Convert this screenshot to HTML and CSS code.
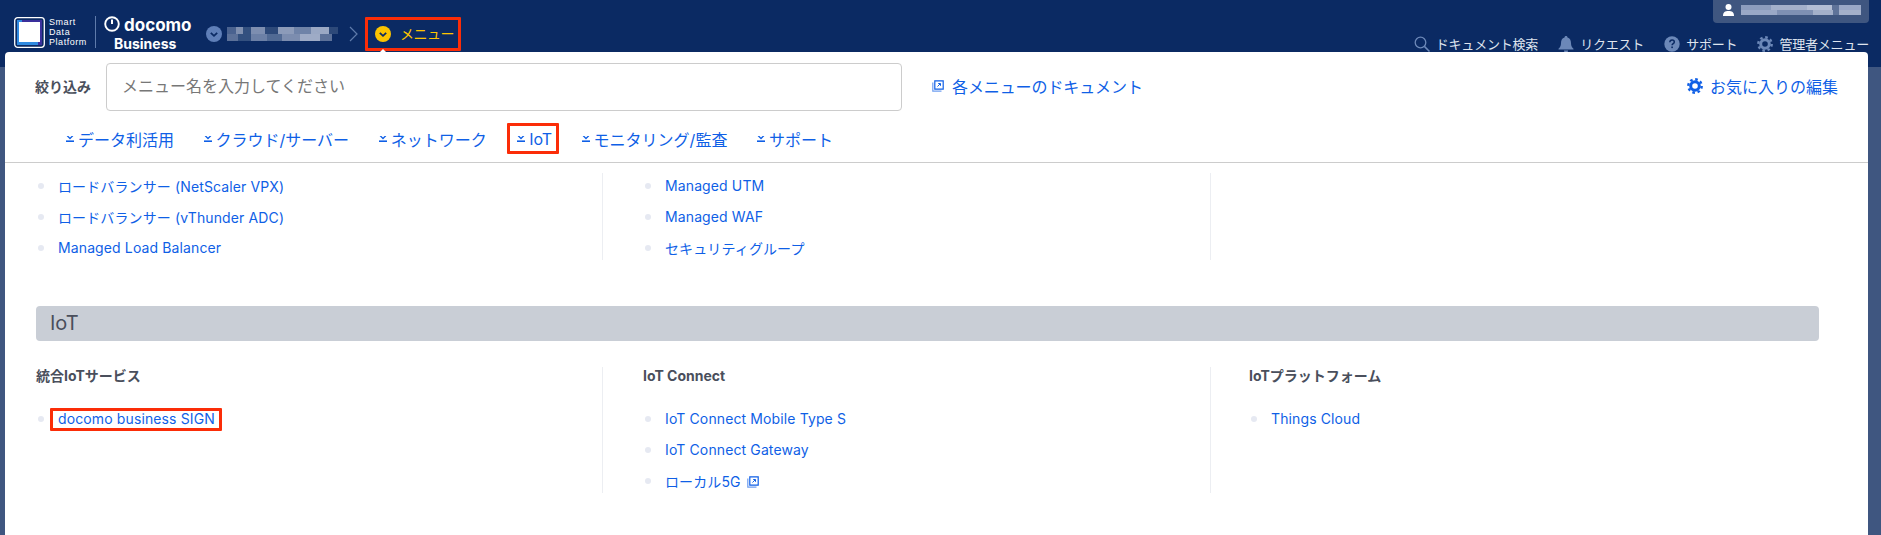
FILE: index.html
```html
<!DOCTYPE html>
<html lang="ja">
<head>
    <meta charset="UTF-8">
    <meta name="viewport" content="width=device-width, initial-scale=1.0">
    <title>Smart Data Platform メニュー</title>
    <link rel="stylesheet" href="styles.css">
</head>
<body>
    <svg class="defs" width="0" height="0">
        <symbol id="gear" viewBox="0 0 16 16">
            <circle cx="8" cy="8" r="6.7" fill="none" stroke="currentColor" stroke-width="2.4" stroke-dasharray="2.6 2.66"/>
            <circle cx="8" cy="8" r="4.3" fill="none" stroke="currentColor" stroke-width="3"/>
        </symbol>
        <symbol id="chevron-circle" viewBox="0 0 16 16">
            <circle cx="8" cy="8" r="8" fill="currentColor"/>
            <path d="M4.8 6.800 8 9.800l3.200-3" fill="none" stroke="#0b2a63" stroke-width="1.800"/>
        </symbol>
        <symbol id="jump" viewBox="0 0 8 6">
            <path d="M.6 0h1.800L4 1.500 5.600 0h1.800L4 3.400z" fill="currentColor"/>
            <path d="M0 4.400h8V6H0z" fill="currentColor"/>
        </symbol>
        <symbol id="doc-link" viewBox="0 0 12 12">
            <path d="M.8 2.500v8.700h8.700" fill="none" stroke="currentColor" stroke-width="1.200" opacity=".6"/>
            <path d="M2.800.8h8.400v8.400H2.800z" fill="none" stroke="currentColor" stroke-width="1.200"/>
            <path d="M5.500 6.500 8.200 3.800M6.200 3.500h2.300v2.300" fill="none" stroke="currentColor" stroke-width="1"/>
        </symbol>
    </svg>

    <header class="header">
        <div class="brand">
            <svg class="sdp-mark" width="31" height="31" viewBox="0 0 31 31">
                <rect x=".7" y=".7" width="29.600" height="29.600" rx="3" fill="#0b2a63" stroke="#fff" stroke-width="1.300"/>
                <path d="M3 3h25v25H3z" fill="#2f8ae0"/>
                <path d="M24 3h4v25h-4zM8 3h20v2.500H8z" fill="#3a2f9c"/>
                <rect x="5" y="5" width="21" height="20" fill="#fff"/>
            </svg>
            <div class="sdp-name">Smart<br>Data<br>Platform</div>
            <div class="brand-line"></div>
            <div class="docomo">
                <div class="docomo-top">
                    <svg width="16" height="16" viewBox="0 0 16 16">
                        <circle cx="8" cy="8" r="6.800" fill="none" stroke="#fff" stroke-width="1.900"/>
                        <path d="M8 3.600V8" stroke="#fff" stroke-width="2"/>
                    </svg>
                    <span class="docomo-word">docomo</span>
                </div>
                <div class="docomo-sub">Business</div>
            </div>
        </div>

        <nav class="crumbs">
            <svg class="crumb-icon crumb-icon-blue" width="16" height="16"><use href="#chevron-circle"/></svg>
            <div class="mosaic mosaic-crumb"></div>
            <svg class="crumb-sep" width="9" height="16" viewBox="0 0 9 16">
                <path d="M1 1l7 7-7 7" fill="none" stroke="#5f7bab" stroke-width="1.200"/>
            </svg>
            <div class="crumb-current marked mark-menu">
                <svg class="crumb-icon" width="16" height="16"><use href="#chevron-circle"/></svg>
                <span>メニュー</span>
            </div>
        </nav>

        <div class="header-right">
            <div class="user-box">
                <svg width="11" height="12" viewBox="0 0 11 12">
                    <circle cx="5.500" cy="3" r="3" fill="#fff"/>
                    <path d="M0 12c0-4 2-5 5.500-5s5.500 1 5.500 5z" fill="#fff"/>
                </svg>
                <div class="mosaic mosaic-user"></div>
            </div>
            <ul class="util-nav">
                <li>
                    <svg width="16" height="16" viewBox="0 0 16 16">
                        <circle cx="6.500" cy="6.500" r="5.300" fill="none" stroke="currentColor" stroke-width="1.300"/>
                        <path d="M10.400 10.400 15.500 15.500" stroke="currentColor" stroke-width="1.500"/>
                    </svg>
                    <span>ドキュメント検索</span>
                </li>
                <li>
                    <svg width="16" height="16" viewBox="0 0 16 16">
                        <path d="M8 0c1 0 1.500.7 1.500 1.500C12 2.200 13 4.500 13 7c0 3 1 4.500 2.500 5.800v.7H.5v-.7C2 11.500 3 10 3 7c0-2.500 1-4.800 3.500-5.500C6.500.7 7 0 8 0zM6 14.500h4a2 2 0 0 1-4 0z" fill="currentColor"/>
                    </svg>
                    <span>リクエスト</span>
                </li>
                <li>
                    <svg width="16" height="16" viewBox="0 0 16 16">
                        <circle cx="8" cy="8" r="7.700" fill="currentColor"/>
                        <path d="M5.800 6.200C5.900 4.800 6.800 4 8.100 4c1.300 0 2.200.8 2.200 1.900 0 1.700-2.200 1.600-2.200 3.400" fill="none" stroke="#0b2a63" stroke-width="1.500"/>
                        <rect x="7.300" y="10.500" width="1.600" height="1.600" fill="#0b2a63"/>
                    </svg>
                    <span>サポート</span>
                </li>
                <li>
                    <svg width="16" height="16"><use href="#gear"/></svg>
                    <span>管理者メニュー</span>
                </li>
            </ul>
        </div>
    </header>

    <main class="menu-panel">
        <div class="filter-row">
            <label class="filter-label" for="menuFilter">絞り込み</label>
            <input class="filter-input" id="menuFilter" type="text" placeholder="メニュー名を入力してください">
            <a class="doc-link" href="#">
                <svg width="12" height="12"><use href="#doc-link"/></svg>
                <span>各メニューのドキュメント</span>
            </a>
            <a class="fav-link" href="#">
                <svg width="16" height="16"><use href="#gear"/></svg>
                <span>お気に入りの編集</span>
            </a>
        </div>

        <div class="tabs">
            <a class="tab" href="#"><svg width="8" height="6"><use href="#jump"/></svg>データ利活用</a>
            <a class="tab" href="#"><svg width="8" height="6"><use href="#jump"/></svg>クラウド/サーバー</a>
            <a class="tab" href="#"><svg width="8" height="6"><use href="#jump"/></svg>ネットワーク</a>
            <a class="tab marked mark-tab" href="#"><svg width="8" height="6"><use href="#jump"/></svg>IoT</a>
            <a class="tab" href="#"><svg width="8" height="6"><use href="#jump"/></svg>モニタリング/監査</a>
            <a class="tab" href="#"><svg width="8" height="6"><use href="#jump"/></svg>サポート</a>
        </div>

        <div class="menu-body">
            <div class="menu-cols">
                <div class="menu-col">
                    <ul class="menu-list">
                        <li><a href="#">ロードバランサー (NetScaler VPX)</a></li>
                        <li><a href="#">ロードバランサー (vThunder ADC)</a></li>
                        <li><a href="#">Managed Load Balancer</a></li>
                    </ul>
                </div>
                <div class="menu-col">
                    <ul class="menu-list">
                        <li><a href="#">Managed UTM</a></li>
                        <li><a href="#">Managed WAF</a></li>
                        <li><a href="#">セキュリティグループ</a></li>
                    </ul>
                </div>
                <div class="menu-col"></div>
            </div>

            <h2 class="section-title">IoT</h2>

            <div class="menu-cols">
                <div class="menu-col">
                    <h3 class="col-title">統合IoTサービス</h3>
                    <ul class="menu-list">
                        <li><a class="marked mark-link" href="#">docomo business SIGN</a></li>
                    </ul>
                </div>
                <div class="menu-col">
                    <h3 class="col-title">IoT Connect</h3>
                    <ul class="menu-list">
                        <li><a href="#">IoT Connect Mobile Type S</a></li>
                        <li><a href="#">IoT Connect Gateway</a></li>
                        <li>
                            <a class="ext-link" href="#">ローカル5G
                                <svg width="12" height="12"><use href="#doc-link"/></svg>
                            </a>
                        </li>
                    </ul>
                </div>
                <div class="menu-col">
                    <h3 class="col-title">IoTプラットフォーム</h3>
                    <ul class="menu-list">
                        <li><a href="#">Things Cloud</a></li>
                    </ul>
                </div>
            </div>
        </div>
    </main>
</body>
</html>
```

FILE: styles.css
```css
* {
    box-sizing: border-box;
}
html, body {
    height: 100%;
}
body {
    margin: 0;
    overflow: hidden;
    background-color: #3f5680;
    font-family: Inter, "Noto Sans CJK JP", sans-serif;
    color: #4a4f5c;
}
a {
    color: #0f5fe6;
    text-decoration: none;
}
ul {
    list-style: none;
    margin: 0;
    padding: 0;
}
.defs {
    position: absolute;
}

/* header */
.header {
    display: flex;
    height: 67px;
    padding: 0 12px 0 14px;
    background-color: #0b2a63;
    color: #fff;
}
.brand {
    display: flex;
    align-items: flex-start;
    padding-top: 16px;
}
.sdp-mark {
    margin-top: 1px;
}
.sdp-name {
    width: 46px;
    margin: 1px 0 0 4px;
    font-family: "Liberation Sans", sans-serif;
    font-size: 9px;
    line-height: 10px;
    letter-spacing: .55px;
}
.brand-line {
    width: 1px;
    height: 32px;
    background-color: #5f7bab;
}
.docomo {
    width: 90px;
    margin-left: 8px;
}
.docomo-top {
    display: flex;
    align-items: flex-start;
    gap: 4px;
    height: 20px;
}
.docomo-word {
    height: 13px;
    margin-top: 3px;
    font-size: 17px;
    font-weight: 700;
    line-height: 13px;
}
.docomo-sub {
    margin-left: 10px;
    font-size: 14px;
    font-weight: 700;
    line-height: 15px;
}
.crumbs {
    display: flex;
    align-items: center;
    height: 68px;
    margin-left: 12px;
}
.crumb-icon-blue {
    color: #5f7fb8;
}
.crumb-sep {
    margin-left: 11px;
}
.crumb-current {
    display: flex;
    align-items: center;
    gap: 9px;
    width: 80px;
    height: 20px;
    margin-left: 17px;
    color: #fcc400;
    font-size: 14px;
    line-height: 20px;
    letter-spacing: -.5px;
}
.mosaic {
    height: 14px;
    background-repeat: no-repeat;
    background-size: 100% 50%;
    background-position: 0 0, 0 100%;
}
.mosaic-crumb {
    width: 111px;
    margin-left: 5px;
    background-image:
        linear-gradient(90deg, #4a628f 0 8%, #8090b0 8% 14%, #33507f 14% 22%, #7d8eb0 22% 34%, #2d4979 34% 46%, #8c9bb9 46% 60%, #6f83a8 60% 76%, #9aa8c4 76% 92%, #2d4979 92%),
        linear-gradient(90deg, #5c7199 0 10%, #33507f 10% 22%, #6c80a6 22% 36%, #516a94 36% 50%, #7c8daf 50% 66%, #9eabc6 66% 84%, #5c7199 84% 95%, #0b2a63 95%);
}
.mosaic-user {
    width: 120px;
    height: 10px;
    background-image:
        linear-gradient(90deg, #8c9cbd 0 25%, #a4b0ca 25% 55%, #b4bed4 55% 76%, #5f7399 76% 82%, #9aa8c6 82% 100%),
        linear-gradient(90deg, #9aa8c6 0 30%, #7f90b3 30% 60%, #a4b0ca 60% 77%, #5f7399 77% 82%, #a4b0ca 82% 100%);
}
.header-right {
    display: flex;
    flex-direction: column;
    align-items: flex-end;
    margin-left: auto;
}
.user-box {
    display: flex;
    align-items: center;
    gap: 7px;
    width: 156px;
    height: 23px;
    padding: 0 0 4px 10px;
    background-color: #3f5680;
    border-radius: 0 0 4px 4px;
}
.util-nav {
    display: flex;
    gap: 20px;
    margin-top: 12px;
    font-size: 13px;
    line-height: 18px;
    letter-spacing: -.2px;
    color: #dfe4ee;
}
.util-nav li {
    display: flex;
    align-items: center;
    gap: 6px;
}
.util-nav svg {
    color: #6c88b8;
}

/* red annotation frames */
.marked {
    position: relative;
}
.marked::after {
    content: "";
    position: absolute;
    border: 3px solid #fb2d08;
    border-radius: 1px;
}
.mark-menu::after {
    top: -7px;
    bottom: -7px;
    left: -10px;
    right: -6px;
}
.mark-menu::before {
    content: "";
    position: absolute;
    z-index: 2;
    top: 25px;
    left: 4px;
    border: 4px solid transparent;
    border-top: 0;
    border-bottom-color: #fff;
}
.mark-tab::after {
    top: -3px;
    bottom: -3px;
    left: -10px;
    right: -7px;
}
.mark-link::after {
    top: -2px;
    bottom: -4px;
    left: -8px;
    right: -7px;
}

/* panel */
.menu-panel {
    position: absolute;
    top: 52px;
    left: 5px;
    right: 13px;
    bottom: 0;
    background-color: #fff;
    border-radius: 4px 4px 0 0;
}
.filter-row {
    display: flex;
    align-items: center;
    padding: 11px 30px 0 30px;
}
.filter-label {
    width: 71px;
    margin-top: -2px;
    font-size: 14px;
    font-weight: 700;
}
.filter-input {
    width: 796px;
    height: 48px;
    padding: 0 15px 2px;
    border: 1px solid #ccc;
    border-radius: 4px;
    font-family: inherit;
    font-size: 16px;
    color: #4a4f5c;
}
.filter-input::placeholder {
    color: #777;
}
.doc-link {
    display: flex;
    align-items: center;
    gap: 8px;
    margin: -2px 0 0 30px;
    font-size: 16px;
    letter-spacing: -.1px;
}
.fav-link {
    display: flex;
    align-items: center;
    gap: 7px;
    margin: -2px 0 0 auto;
    font-size: 16px;
}
.tabs {
    display: flex;
    gap: 29.500px;
    height: 52px;
    padding: 15px 0 0 61px;
    border-bottom: 1px solid #ccc;
}
.tab {
    display: flex;
    align-items: center;
    gap: 4px;
    height: 25px;
    font-size: 16px;
}
.mark-tab {
    margin-left: 1px;
}
.menu-body {
    padding: 10px 49px 0 31px;
}
.menu-cols {
    display: grid;
    grid-template-columns: 566px 608px 1fr;
}
.menu-col {
    padding: 0 0 2px;
}
.menu-col + .menu-col {
    padding-left: 40px;
    border-left: 1px solid #eceef2;
}
.menu-col:last-child {
    padding-left: 38px;
}
.menu-list {
    padding-top: 2px;
    font-size: 14px;
    letter-spacing: .12px;
}
.menu-list li {
    display: flex;
    align-items: center;
    height: 21px;
    margin-bottom: 10px;
}
.menu-list li:last-child {
    margin-bottom: 0;
}
.menu-list li::before {
    content: "";
    width: 6px;
    height: 6px;
    margin: 0 14px 0 2px;
    background-color: #e6e9f2;
    border-radius: 50%;
}
.ext-link svg {
    margin-left: 2px;
    vertical-align: -1px;
}
.section-title {
    height: 35px;
    margin: 46px 0 26px;
    padding-left: 14px;
    background-color: #c9ced6;
    border-radius: 4px;
    font-size: 20px;
    font-weight: 400;
    line-height: 35px;
}
.col-title {
    margin: 0 0 21px;
    font-size: 14px;
    font-weight: 700;
    line-height: 18px;
}
```
